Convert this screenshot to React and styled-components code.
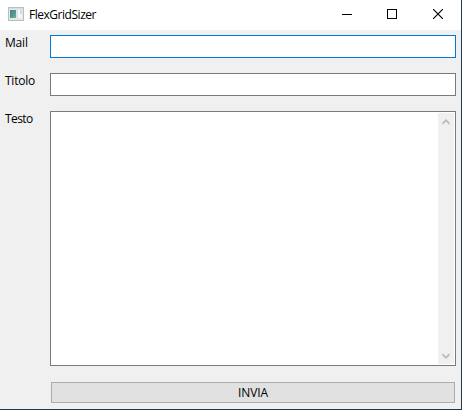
import React from "react";
import styled, { createGlobalStyle } from "styled-components";

const GlobalStyle = createGlobalStyle`
  * { box-sizing: border-box; }
  body { margin: 0; overflow: hidden; font: 12px/16px "Open Sans", "Noto Sans", sans-serif; color: #000; }
`;

const Window = styled.div`
  width: 462px;
  height: 410px;
  display: flex;
  flex-direction: column;
  background: #f0f0f0;
  border-right: 1px solid #1c3c56;
  border-bottom: 1px solid #1c3c56;
`;

const TitleBar = styled.header`
  height: 30px;
  flex: none;
  display: flex;
  align-items: flex-start;
  padding-left: 8px;
  background: #fff;
`;

const AppIconSvg = styled.svg`
  flex: none;
  margin-top: 7px;
`;

const Text = styled.span`
  display: block;
  width: max-content;
  letter-spacing: ${(p) => p.$spacing || 0}px;
`;

const Title = styled.div`
  flex: 1;
  padding: 7px 0 0 5px;
`;

const Controls = styled.div`
  display: flex;
`;

const ControlButton = styled.button`
  width: ${(p) => p.$width || 45}px;
  height: 28px;
  padding: 0;
  border: 0;
  background: none;
  display: flex;
  align-items: center;
  justify-content: center;
`;

const Form = styled.form`
  flex: 1;
  display: grid;
  grid-template-columns: 45px 406px;
  grid-template-rows: 23px 23px 255px 21px;
  row-gap: 15px;
  padding: 5px;
`;

const Label = styled.label`
  white-space: nowrap;
`;

const Input = styled.input`
  width: 100%;
  height: 23px;
  padding: 2px 4px;
  font: inherit;
  background: #fff;
  border: 1px solid ${(p) => (p.$active ? "#0078d7" : "#7a7a7a")};
  border-radius: 0;
  outline: none;
`;

const TextBox = styled.div`
  display: flex;
  background: #fff;
  border: 1px solid #7a7a7a;
  padding: 1px;
`;

const TextArea = styled.textarea`
  flex: 1;
  border: 0;
  padding: 2px;
  resize: none;
  outline: none;
  font: inherit;
  background: transparent;
`;

const ScrollBar = styled.div`
  width: 16px;
  display: flex;
  flex-direction: column;
  align-items: center;
  justify-content: space-between;
  padding: 6px 1px 5px 0;
  background: #f0f0f0;
`;

const SubmitButton = styled.button`
  grid-column: 2;
  height: 21px;
  margin: 1px 1px 0;
  padding: 0;
  display: flex;
  align-items: center;
  justify-content: center;
  font: inherit;
  color: #000;
  background: #e1e1e1;
  border: 1px solid #adadad;
`;

const AppIcon = () => (
  <AppIconSvg width="16" height="14" viewBox="0 0 16 14">
    <defs>
      <linearGradient id="pane" x1="0" y1="0" x2="1" y2="1">
        <stop offset="0" stopColor="#4b7fa8" />
        <stop offset=".5" stopColor="#4d9689" />
        <stop offset="1" stopColor="#72b984" />
      </linearGradient>
    </defs>
    <rect x=".5" y=".5" width="15" height="13" fill="#e4e7eb" stroke="#b9bdc6" />
    <path d="M1 1.5h14" stroke="#d5dce4" />
    <rect x="2" y="3" width="6" height="8" fill="url(#pane)" />
    <rect x="8" y="3" width="2" height="8" fill="#dbe7e6" />
    <rect x="10" y="3" width="4" height="8" fill="#f6f7f7" />
    <rect x="12" y="3" width="2" height="4" fill="#c9dfd7" />
  </AppIconSvg>
);

const Chevron = ({ down }) => (
  <svg width="8" height="6" viewBox="0 0 8 6">
    <path
      transform={down ? "matrix(1 0 0 -1 0 6)" : undefined}
      d="M4 0L7.6 3.6V6L4 2.6L.4 6V3.6z"
      fill="#bbbbbb"
    />
  </svg>
);

const Glyph = ({ d, crisp }) => (
  <svg width="10" height="10" viewBox="0 0 10 10" shapeRendering={crisp ? "crispEdges" : "auto"}>
    <path d={d} fill="none" stroke="#000" strokeWidth={crisp ? 1 : 1.15} />
  </svg>
);

export default function App() {
  return (
    <>
      <GlobalStyle />
      <Window>
        <TitleBar>
          <AppIcon />
          <Title><Text $spacing={-0.47}>FlexGridSizer</Text></Title>
          <Controls>
            <ControlButton $width={46} aria-label="Minimize"><Glyph crisp d="M0 5.5h10" /></ControlButton>
            <ControlButton $width={44} aria-label="Maximize"><Glyph crisp d="M.5.5h9v9h-9z" /></ControlButton>
            <ControlButton $width={47} aria-label="Close"><Glyph d="M0 0l10 10M10 0L0 10" /></ControlButton>
          </Controls>
        </TitleBar>
        <Form onSubmit={(e) => e.preventDefault()}>
          <Label htmlFor="mail"><Text $spacing={-0.2}>Mail</Text></Label>
          <Input id="mail" $active />
          <Label htmlFor="titolo"><Text $spacing={-0.25}>Titolo</Text></Label>
          <Input id="titolo" />
          <Label htmlFor="testo"><Text $spacing={-0.6}>Testo</Text></Label>
          <TextBox>
            <TextArea id="testo" />
            <ScrollBar>
              <Chevron />
              <Chevron down />
            </ScrollBar>
          </TextBox>
          <SubmitButton><Text $spacing={-0.1}>INVIA</Text></SubmitButton>
        </Form>
      </Window>
    </>
  );
}
